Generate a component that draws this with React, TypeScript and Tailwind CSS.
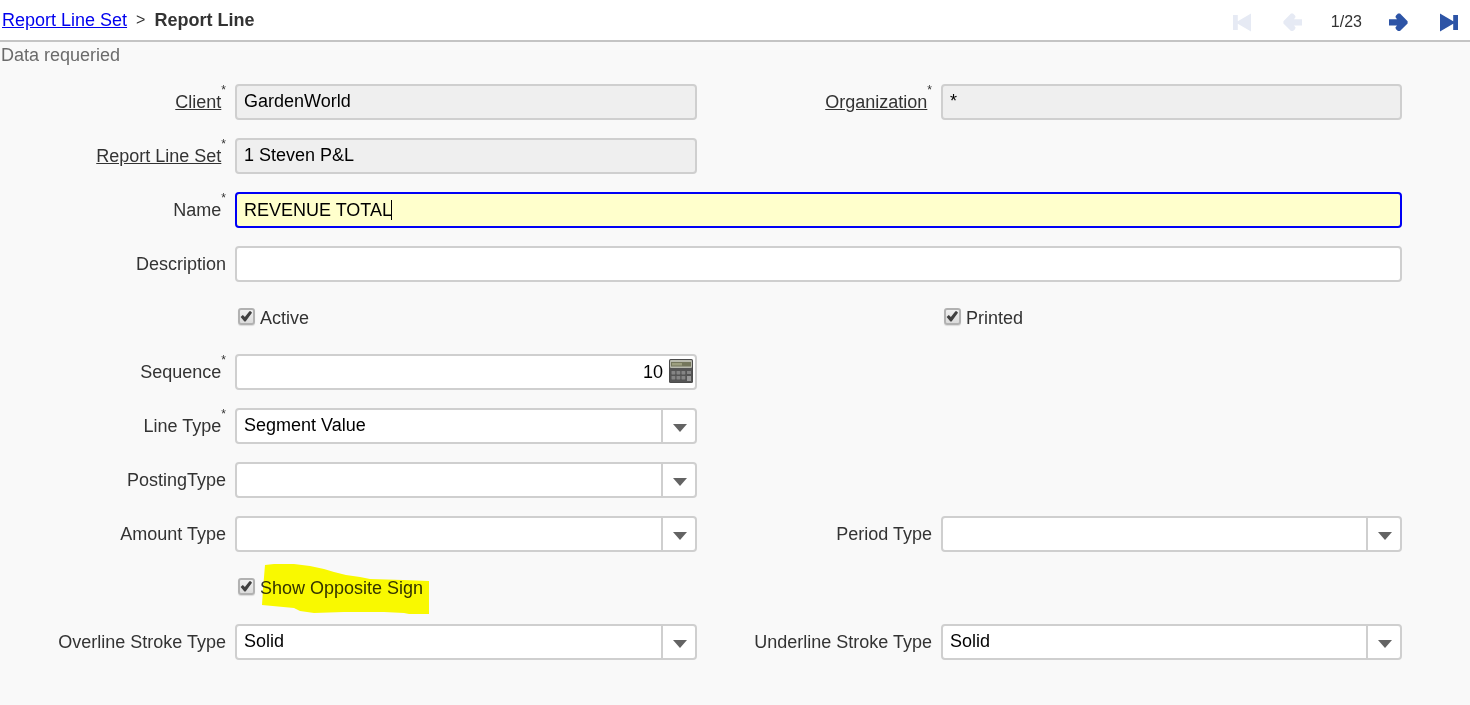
import React from "react";

function Check({ id, label, marked }: { id: string; label: string; marked?: boolean }) {
  return (
    <div className="relative flex h-9 items-center gap-[5px] pl-[3px]">
      <span className="relative -mt-1 block size-[17px]">
        <input
          id={id}
          type="checkbox"
          defaultChecked
          className="peer block size-[17px] appearance-none rounded-[3px] border-2 border-[#b2b2b2] bg-linear-to-b from-[#f0f0f0] to-[#dcdcdc] shadow-[0_1px_1px_rgba(0,0,0,0.12)]"
        />
        <svg viewBox="0 0 17 17" className="pointer-events-none absolute inset-0 hidden size-[17px] peer-checked:block">
          <path d="M2.6 9 4.8 7 6.9 9 11.4 3.2H12.8L14 4.8 7.6 13.4H6.4Z" fill="#404040" />
        </svg>
      </span>
      <label htmlFor={id} className="text-lg leading-9 text-[#333]">
        {label}
      </label>
      {marked && (
        <svg
          viewBox="0 0 168 50"
          aria-hidden="true"
          className="pointer-events-none absolute -top-[6px] left-[27px] h-[50px] w-[168px] mix-blend-multiply"
        >
          <path
            d="M3 1 12 0H32L48 2 62 5 72 8 84 11 98 13 108 15 141 16 167 17V50H147L142 49 122 48H82L52 49 38 47 32 44 0 41 1 25Z"
            fill="#ffff00"
          />
        </svg>
      )}
    </div>
  );
}

function FieldLabel({
  id,
  text,
  required,
  linked,
}: {
  id: string;
  text: string;
  required?: boolean;
  linked?: boolean;
}) {
  return (
    <label htmlFor={id} className="flex h-9 items-start justify-end pr-[9px] text-lg leading-9 whitespace-nowrap text-[#333]">
      <span className={linked ? "underline" : ""}>{text}</span>
      {required && <span className="text-xs leading-3">*</span>}
    </label>
  );
}

const box = "block h-9 w-full rounded-[4px] border-2 border-[#cfcfcf] px-[7px] text-lg text-black outline-none";

function ReadOnly({ id, value }: { id: string; value: string }) {
  return <input id={id} readOnly defaultValue={value} className={`${box} bg-[#efefef] pb-[2px]`} />;
}

function Combo({ id, value }: { id: string; value: string }) {
  return (
    <div className="relative">
      <select id={id} defaultValue={value} className={`${box} appearance-none bg-white pr-10 pb-[2px]`}>
        <option>{value}</option>
      </select>
      <span className="pointer-events-none absolute inset-y-0 right-0 flex w-9 items-center justify-center border-l-2 border-[#cfcfcf] pt-1">
        <svg viewBox="0 0 14 8" className="h-2 w-[14px]">
          <path d="M0 0H14L7 8Z" fill="#636363" />
        </svg>
      </span>
    </div>
  );
}

function Calculator() {
  return (
    <svg viewBox="0 0 24 24" className="size-6">
      <rect width="24" height="24" rx="1.5" fill="#4c4c4c" />
      <rect x="1" y="1" width="22" height="8" rx="1" fill="#b9baae" />
      <rect x="2" y="3" width="20" height="4.5" fill="#75775c" />
      <rect x="3" y="4" width="10" height="2.5" fill="#9c9e7e" />
      <rect x="1" y="9" width="22" height="14" fill="#555" />
      <g fill="#858585">
        {[2.5, 7.5, 12.5].map((x) =>
          [12, 17].map((y) => <rect key={`${x}-${y}`} x={x} y={y} width="3.8" height="3.4" rx="0.6" />),
        )}
        <rect x="18" y="12" width="4" height="3" />
        <rect x="18" y="17" width="4" height="5" fill="#999" />
      </g>
    </svg>
  );
}

function NavButton({ label, d, disabled, flip }: { label: string; d: string; disabled?: boolean; flip?: boolean }) {
  return (
    <button type="button" aria-label={label} disabled={disabled} className="block text-[#2d54a6] disabled:text-[#e6eaf4]">
      <svg viewBox="0 0 20 20" className={flip ? "size-5 -scale-x-100" : "size-5"} fill="currentColor">
        <path d={d} />
      </svg>
    </button>
  );
}

const arrow = "M1 7.3H9L7.4 5 8 3.4 10 1.5H12L19.6 9.2V11.4L12 19H10L8 17.2 7.4 15.6 9 13.4H1Z";
const end = "M1 1.5 14.2 9.3V3H19V18H14.2V11.7L1 19.5Z";

export default function App() {
  return (
    <div className="min-h-screen bg-[#f9f9f9] font-['Liberation_Sans',Arial,sans-serif]">
      <header className="flex h-[42px] items-center justify-between border-b-2 border-[#c4c4c4] bg-white pr-[11px] pl-[2px]">
        <nav className="flex gap-[9px] text-lg text-[#333]">
          <a href="#set" className="text-[#0000ee] underline">
            Report Line Set
          </a>
          <span className="text-base leading-7">&gt;</span>
          <span className="font-bold">Report Line</span>
        </nav>
        <div className="flex items-center pt-1">
          <div className="flex gap-[31px]">
            <NavButton label="First record" d={end} disabled flip />
            <NavButton label="Previous record" d={arrow} disabled flip />
          </div>
          <span className="pr-[26px] pl-7 text-base text-[#333]">1/23</span>
          <div className="flex gap-[31px]">
            <NavButton label="Next record" d={arrow} />
            <NavButton label="Last record" d={end} />
          </div>
        </div>
      </header>
      <p className="pl-px text-lg leading-[26px] text-[#6b6b6b]">Data requeried</p>
      <form className="grid grid-cols-[235fr_462fr_244fr_461fr_68fr] gap-y-[18px] pt-4 pb-10">
        <FieldLabel id="client" text="Client" required linked />
        <ReadOnly id="client" value="GardenWorld" />
        <FieldLabel id="org" text="Organization" required linked />
        <ReadOnly id="org" value="*" />

        <div className="col-start-1">
          <FieldLabel id="lineset" text="Report Line Set" required linked />
        </div>
        <ReadOnly id="lineset" value="1 Steven P&L" />

        <div className="col-start-1">
          <FieldLabel id="name" text="Name" required />
        </div>
        <div className="relative col-span-3">
          <input
            id="name"
            defaultValue="REVENUE TOTAL"
            className="block h-9 w-full rounded-[4px] border-2 border-[#0000f5] bg-[#ffffcc] px-[7px] text-lg text-black outline-none"
          />
          <span className="absolute top-2 left-[156px] h-5 w-px bg-black" />
        </div>

        <div className="col-start-1">
          <FieldLabel id="description" text="Description" />
        </div>
        <div className="col-span-3">
          <input id="description" className={`${box} bg-white`} />
        </div>

        <div className="col-start-2">
          <Check id="active" label="Active" />
        </div>
        <div className="col-start-4">
          <Check id="printed" label="Printed" />
        </div>

        <div className="col-start-1">
          <FieldLabel id="sequence" text="Sequence" required />
        </div>
        <div className="relative">
          <input id="sequence" defaultValue="10" className={`${box} bg-white pr-8 text-right`} />
          <button type="button" aria-label="Calculator" className="absolute top-[5px] right-1">
            <Calculator />
          </button>
        </div>

        <div className="col-start-1">
          <FieldLabel id="linetype" text="Line Type" required />
        </div>
        <Combo id="linetype" value="Segment Value" />

        <div className="col-start-1">
          <FieldLabel id="posting" text="PostingType" />
        </div>
        <Combo id="posting" value="" />

        <div className="col-start-1">
          <FieldLabel id="amount" text="Amount Type" />
        </div>
        <Combo id="amount" value="" />
        <FieldLabel id="period" text="Period Type" />
        <Combo id="period" value="" />

        <div className="col-start-2">
          <Check id="opposite" label="Show Opposite Sign" marked />
        </div>

        <div className="col-start-1">
          <FieldLabel id="overline" text="Overline Stroke Type" />
        </div>
        <Combo id="overline" value="Solid" />
        <FieldLabel id="underline" text="Underline Stroke Type" />
        <Combo id="underline" value="Solid" />
      </form>
    </div>
  );
}
